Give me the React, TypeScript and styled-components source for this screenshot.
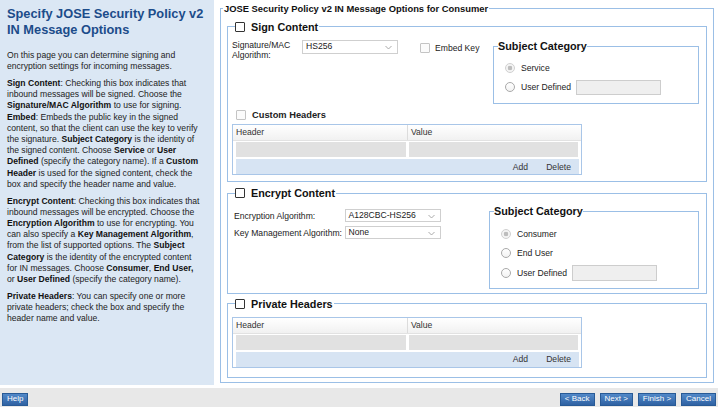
import React from "react";
import styled, { createGlobalStyle } from "styled-components";

const Global = createGlobalStyle`
  html, body { margin: 0; padding: 0; background: #fff; }
  body { font-family: "Liberation Sans", Arial, sans-serif; }
  * { box-sizing: border-box; }
`;

const Page = styled.div`
  width: 718px;
  height: 407px;
  display: flex;
  flex-direction: column;
  overflow: hidden;
  font-family: "Liberation Sans", Arial, sans-serif;
  color: #222;
`;

const Main = styled.div`
  display: flex;
  height: 388px;
  flex: none;
`;

const Side = styled.aside`
  width: 214px;
  height: 385px;
  flex: none;
  background: #dbe7f4;
  padding: 6px 0 0 7px;
`;

const Title = styled.h1`
  margin: 0;
  font-size: 12.8px;
  line-height: 15.5px;
  font-weight: bold;
  color: #1c4c8a;
`;

const Para = styled.p<{ $first?: boolean }>`
  margin: ${(p) => (p.$first ? "13px" : "0")} 0 5.6px;
  font-size: 8.6px;
  line-height: 11.2px;
  white-space: nowrap;
  color: #222;
  b { color: #111; }
`;

const Content = styled.div`
  flex: 1;
  min-width: 0;
  padding: 2.5px 4px 0 6px;
`;

const Outer = styled.fieldset`
  margin: 0;
  padding: 0 6px 4px;
  border: 1px solid #9bbfe6;
  min-width: 0;
`;

const OuterLegend = styled.legend`
  padding: 0 1px;
  margin-left: -4px;
  font-size: 9.4px;
  line-height: 12px;
  font-weight: bold;
  color: #111;
`;

const Section = styled.fieldset<{ $top: number; $pad: string }>`
  margin: ${(p) => p.$top}px 0 0;
  padding: ${(p) => p.$pad};
  border: 1px solid #9bbfe6;
  min-width: 0;
`;

const SectionLegend = styled.legend`
  padding: 0 1px 0 0;
  margin-left: 3px;
  font-size: 10.8px;
  line-height: 12px;
`;

const LegendInner = styled.span`
  display: flex;
  align-items: center;
  gap: 6px;
  height: 12px;
  font-size: 10.8px;
  font-weight: bold;
  color: #111;
  white-space: nowrap;
`;

const Box = styled.span<{ $disabled?: boolean }>`
  display: inline-block;
  flex: none;
  width: 10px;
  height: 10px;
  border: 1px solid ${(p) => (p.$disabled ? "#c4c4c4" : "#333")};
  border-radius: 1px;
  background: ${(p) => (p.$disabled ? "#fbfbfb" : "#fff")};
`;

const TopRow = styled.div`
  display: flex;
  align-items: flex-start;
`;

const AlgoLabel = styled.div`
  width: 70px;
  font-size: 8.6px;
  line-height: 10px;
  color: #222;
`;

const SelectBox = styled.div<{ $w: number }>`
  position: relative;
  width: ${(p) => p.$w}px;
  height: 13.5px;
  flex: none;
  border: 1px solid #cfcfcf;
  background: #fff;
  font-size: 8.6px;
  line-height: 11.5px;
  padding-left: 3px;
  color: #222;
  svg {
    position: absolute;
    right: 5px;
    top: 4px;
  }
`;

const CheckLabel = styled.label<{ $ml: number; $mt: number; $bold?: boolean }>`
  display: flex;
  align-items: center;
  gap: ${(p) => (p.$bold ? 6 : 5)}px;
  margin-left: ${(p) => p.$ml}px;
  margin-top: ${(p) => p.$mt}px;
  height: 12px;
  font-size: ${(p) => (p.$bold ? "9.3px" : "8.6px")};
  font-weight: ${(p) => (p.$bold ? "bold" : "normal")};
  color: #222;
  white-space: nowrap;
`;

const Subject = styled.fieldset<{ $w: number; $pt: number; $pb: number }>`
  margin: 0 0 0 auto;
  width: ${(p) => p.$w}px;
  flex: none;
  padding: ${(p) => p.$pt}px 0 ${(p) => p.$pb}px 11px;
  border: 1px solid #9bbfe6;
  min-width: 0;
`;

const SubjectLegend = styled.legend`
  padding: 0;
  margin-left: -7px;
  font-size: 10.8px;
  line-height: 13px;
  font-weight: bold;
  color: #111;
`;

const RadioRow = styled.div`
  display: flex;
  align-items: center;
  height: 19.5px;
  font-size: 8.6px;
  color: #222;
  white-space: nowrap;
`;

const Radio = styled.span<{ $checked?: boolean }>`
  display: inline-block;
  flex: none;
  width: 10px;
  height: 10px;
  margin-right: 6px;
  border-radius: 50%;
  border: 1px solid ${(p) => (p.$checked ? "#d0d0d0" : "#a9a9a9")};
  background: ${(p) =>
    p.$checked
      ? "radial-gradient(circle, #bdbdbd 0 2px, #f4f4f4 2.6px)"
      : "linear-gradient(#fff, #f3f3f3)"};
`;

const TextInput = styled.span<{ $h: number }>`
  display: inline-block;
  width: 85px;
  height: ${(p) => p.$h}px;
  margin-left: 5px;
  border: 1px solid #cdcdcd;
  background: #efefef;
`;

const Table = styled.div<{ $mt: number }>`
  width: 350px;
  margin-top: ${(p) => p.$mt}px;
  border: 1px solid #a9c6e8;
  font-size: 8.6px;
  color: #333;
`;

const HeadRow = styled.div`
  display: grid;
  grid-template-columns: 174px 1fr;
  height: 16px;
  background: linear-gradient(#ffffff, #f1f1f1);
  border-bottom: 1px solid #e2e2e2;
`;

const HeadCell = styled.div<{ $divider?: boolean }>`
  padding-left: 3px;
  line-height: 14px;
  border-left: ${(p) => (p.$divider ? "1px solid #dcdcdc" : "none")};
`;

const DataRow = styled.div`
  display: grid;
  grid-template-columns: 170px 1fr;
  gap: 3px;
  margin: 1px 3px 0;
  height: 15px;
`;

const DataCell = styled.div`
  background: #e1e1e1;
`;

const TableFoot = styled.div`
  display: flex;
  justify-content: flex-end;
  align-items: center;
  gap: 18px;
  margin: 2px 2px 0 3px;
  height: 15px;
  padding-right: 8px;
  background: #d7e4f3;
  color: #333;
`;

const EncBody = styled.div`
  display: flex;
  align-items: flex-start;
`;

const EncFields = styled.div`
  display: flex;
  flex-direction: column;
  gap: 4px;
  margin: 4px 0 0 2px;
`;

const EncRow = styled.div`
  display: flex;
  align-items: center;
  height: 13px;
`;

const EncLabel = styled.span`
  width: 110.5px;
  font-size: 8.6px;
  color: #222;
  white-space: nowrap;
`;

const Footer = styled.footer`
  height: 19px;
  flex: none;
  background: #e8e8e8;
  display: flex;
  align-items: flex-start;
  padding: 5px 2px 0 2px;
`;

const ButtonGroup = styled.div`
  margin-left: auto;
  display: flex;
  gap: 5px;
`;

const Btn = styled.button`
  height: 12.5px;
  padding: 0 4px;
  margin: 0;
  border: 1px solid #285a96;
  background: linear-gradient(#5288c8, #2f62a3);
  color: #fff;
  font-family: "Liberation Sans", Arial, sans-serif;
  font-size: 8px;
  line-height: 10px;
  cursor: pointer;
`;

const Chevron = () => (
  <svg width="7" height="5" viewBox="0 0 7 5">
    <polyline points="0.5,1 3.5,4 6.5,1" fill="none" stroke="#a0a0a0" strokeWidth="0.9" />
  </svg>
);

const Select = ({ w, value }: { w: number; value: string }) => (
  <SelectBox $w={w}>
    {value}
    <Chevron />
  </SelectBox>
);

const HeaderTable = ({ mt }: { mt: number }) => (
  <Table $mt={mt}>
    <HeadRow>
      <HeadCell>Header</HeadCell>
      <HeadCell $divider>Value</HeadCell>
    </HeadRow>
    <DataRow>
      <DataCell />
      <DataCell />
    </DataRow>
    <TableFoot>
      <span>Add</span>
      <span>Delete</span>
    </TableFoot>
  </Table>
);

export default function App() {
  return (
    <Page>
      <Global />
      <Main>
        <Side>
          <Title>
            Specify JOSE Security Policy v2
            <br />
            IN Message Options
          </Title>
          <Para $first>
            On this page you can determine signing and
            <br />
            encryption settings for incoming messages.
          </Para>
          <Para>
            <b>Sign Content</b>: Checking this box indicates that
            <br />
            inbound messages will be signed. Choose the
            <br />
            <b>Signature/MAC Algorithm</b> to use for signing.
            <br />
            <b>Embed</b>: Embeds the public key in the signed
            <br />
            content, so that the client can use the key to verify
            <br />
            the signature. <b>Subject Category</b> is the identity of
            <br />
            the signed content. Choose <b>Service</b> or <b>User</b>
            <br />
            <b>Defined</b> (specify the category name). If a <b>Custom</b>
            <br />
            <b>Header</b> is used for the signed content, check the
            <br />
            box and specify the header name and value.
          </Para>
          <Para>
            <b>Encrypt Content</b>: Checking this box indicates that
            <br />
            inbound messages will be encrypted. Choose the
            <br />
            <b>Encryption Algorithm</b> to use for encrypting. You
            <br />
            can also specify a <b>Key Management Algorithm</b>,
            <br />
            from the list of supported options. The <b>Subject</b>
            <br />
            <b>Category</b> is the identity of the encrypted content
            <br />
            for IN messages. Choose <b>Consumer</b>, <b>End User,</b>
            <br />
            or <b>User Defined</b> (specify the category name).
          </Para>
          <Para>
            <b>Private Headers</b>: You can specify one or more
            <br />
            private headers; check the box and specify the
            <br />
            header name and value.
          </Para>
        </Side>
        <Content>
          <Outer>
            <OuterLegend>JOSE Security Policy v2 IN Message Options for Consumer</OuterLegend>
            <Section $top={6} $pad="7.5px 7px 6px 4px">
              <SectionLegend>
                <LegendInner>
                  <Box />
                  Sign Content
                </LegendInner>
              </SectionLegend>
              <TopRow>
                <AlgoLabel>
                  Signature/MAC
                  <br />
                  Algorithm:
                </AlgoLabel>
                <Select w={96} value="HS256" />
                <CheckLabel $ml={22} $mt={2}>
                  <Box $disabled />
                  Embed Key
                </CheckLabel>
                <Subject $w={206} $pt={5} $pb={6}>
                  <SubjectLegend>Subject Category</SubjectLegend>
                  <RadioRow>
                    <Radio $checked />
                    Service
                  </RadioRow>
                  <RadioRow>
                    <Radio />
                    User Defined
                    <TextInput $h={15} />
                  </RadioRow>
                </Subject>
              </TopRow>
              <CheckLabel $ml={4} $mt={5} $bold>
                <Box $disabled />
                Custom Headers
              </CheckLabel>
              <HeaderTable mt={3} />
            </Section>
            <Section $top={5} $pad="6px 7px 4px 4px">
              <SectionLegend>
                <LegendInner>
                  <Box />
                  Encrypt Content
                </LegendInner>
              </SectionLegend>
              <EncBody>
                <EncFields>
                  <EncRow>
                    <EncLabel>Encryption Algorithm:</EncLabel>
                    <Select w={96} value="A128CBC-HS256" />
                  </EncRow>
                  <EncRow>
                    <EncLabel>Key Management Algorithm:</EncLabel>
                    <Select w={96} value="None" />
                  </EncRow>
                </EncFields>
                <Subject $w={210} $pt={6} $pb={5}>
                  <SubjectLegend>Subject Category</SubjectLegend>
                  <RadioRow>
                    <Radio $checked />
                    Consumer
                  </RadioRow>
                  <RadioRow>
                    <Radio />
                    End User
                  </RadioRow>
                  <RadioRow>
                    <Radio />
                    User Defined
                    <TextInput $h={15.5} />
                  </RadioRow>
                </Subject>
              </EncBody>
            </Section>
            <Section $top={4} $pad="7px 7px 9px 4px">
              <SectionLegend>
                <LegendInner>
                  <Box />
                  Private Headers
                </LegendInner>
              </SectionLegend>
              <HeaderTable mt={0} />
            </Section>
          </Outer>
        </Content>
      </Main>
      <Footer>
        <Btn>Help</Btn>
        <ButtonGroup>
          <Btn>&lt; Back</Btn>
          <Btn>Next &gt;</Btn>
          <Btn>Finish &gt;</Btn>
          <Btn>Cancel</Btn>
        </ButtonGroup>
      </Footer>
    </Page>
  );
}
